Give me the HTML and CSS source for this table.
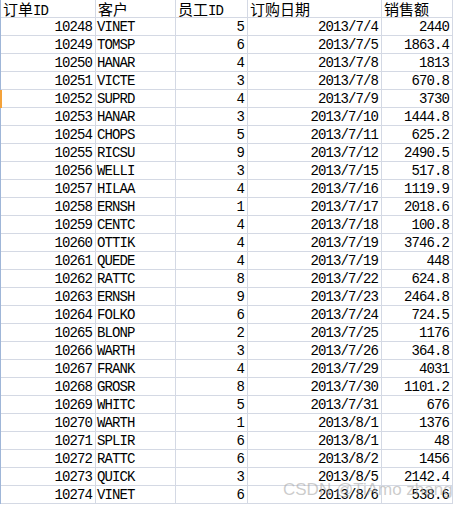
FILE: index.html
```html
<!DOCTYPE html>
<html lang="zh">
<head>
<meta charset="utf-8">
<link rel="stylesheet" href="styles.css">
</head>
<body>
<div class="sheet">
  <div class="grid" id="grid">
    <div class="c h"><span class="cjk">订单</span>ID</div>
    <div class="c h"><span class="cjk">客户</span></div>
    <div class="c h"><span class="cjk">员工</span>ID</div>
    <div class="c h"><span class="cjk">订购日期</span></div>
    <div class="c h"><span class="cjk">销售额</span></div>
  </div>
  <div class="mark"></div>
  <div class="wm">CSDN @TiAmo zhang</div>
</div>
<script src="app.js"></script>
</body>
</html>
```

FILE: app.js
```js
const rows = [
["10248","VINET","5","2013/7/4","2440"],
["10249","TOMSP","6","2013/7/5","1863.4"],
["10250","HANAR","4","2013/7/8","1813"],
["10251","VICTE","3","2013/7/8","670.8"],
["10252","SUPRD","4","2013/7/9","3730"],
["10253","HANAR","3","2013/7/10","1444.8"],
["10254","CHOPS","5","2013/7/11","625.2"],
["10255","RICSU","9","2013/7/12","2490.5"],
["10256","WELLI","3","2013/7/15","517.8"],
["10257","HILAA","4","2013/7/16","1119.9"],
["10258","ERNSH","1","2013/7/17","2018.6"],
["10259","CENTC","4","2013/7/18","100.8"],
["10260","OTTIK","4","2013/7/19","3746.2"],
["10261","QUEDE","4","2013/7/19","448"],
["10262","RATTC","8","2013/7/22","624.8"],
["10263","ERNSH","9","2013/7/23","2464.8"],
["10264","FOLKO","6","2013/7/24","724.5"],
["10265","BLONP","2","2013/7/25","1176"],
["10266","WARTH","3","2013/7/26","364.8"],
["10267","FRANK","4","2013/7/29","4031"],
["10268","GROSR","8","2013/7/30","1101.2"],
["10269","WHITC","5","2013/7/31","676"],
["10270","WARTH","1","2013/8/1","1376"],
["10271","SPLIR","6","2013/8/1","48"],
["10272","RATTC","6","2013/8/2","1456"],
["10273","QUICK","3","2013/8/5","2142.4"],
["10274","VINET","6","2013/8/6","538.6"]
];
const g = document.getElementById("grid");
for (const r of rows) {
  r.forEach((v, i) => {
    const d = document.createElement("div");
    d.className = "c " + (i === 1 ? "l" : "r");
    d.textContent = v;
    g.appendChild(d);
  });
}
```

FILE: styles.css
```css
html, body {
  margin: 0;
  padding: 0;
  background: #fff;
}
.sheet {
  position: relative;
  width: 456px;
  height: 508px;
  overflow: hidden;
}
.grid {
  display: grid;
  grid-template-columns: 95px 80px 72px 134px 71px;
  grid-auto-rows: 18px;
  width: 452px;
  border-left: 1px solid #9fb6d8;
  font-family: "Liberation Mono", "Noto Sans CJK SC", monospace;
  font-size: 14px;
  letter-spacing: -0.9px;
  color: #000;
}
.c {
  border-right: 1px solid #d4d9e4;
  border-bottom: 1px solid #d4d9e4;
  height: 17px;
  line-height: 19px;
  padding: 0 3px 0 2px;
  white-space: nowrap;
  overflow: hidden;
}
.h {
  text-align: left;
  padding-left: 2px;
  line-height: 18px;
}
.cjk {
  font-family: "Noto Sans CJK SC", sans-serif;
  font-size: 15px;
  letter-spacing: 0;
}
.r { text-align: right; }
.l { text-align: left; padding-left: 1px; }
.mark {
  position: absolute;
  left: 0;
  top: 90px;
  width: 2px;
  height: 18px;
  background: #f4a23a;
}
.wm {
  position: absolute;
  left: 283px;
  top: 480px;
  font-family: "Liberation Sans", Arial, sans-serif;
  font-size: 17px;
  color: rgba(170, 170, 170, 0.6);
  white-space: nowrap;
}
```
